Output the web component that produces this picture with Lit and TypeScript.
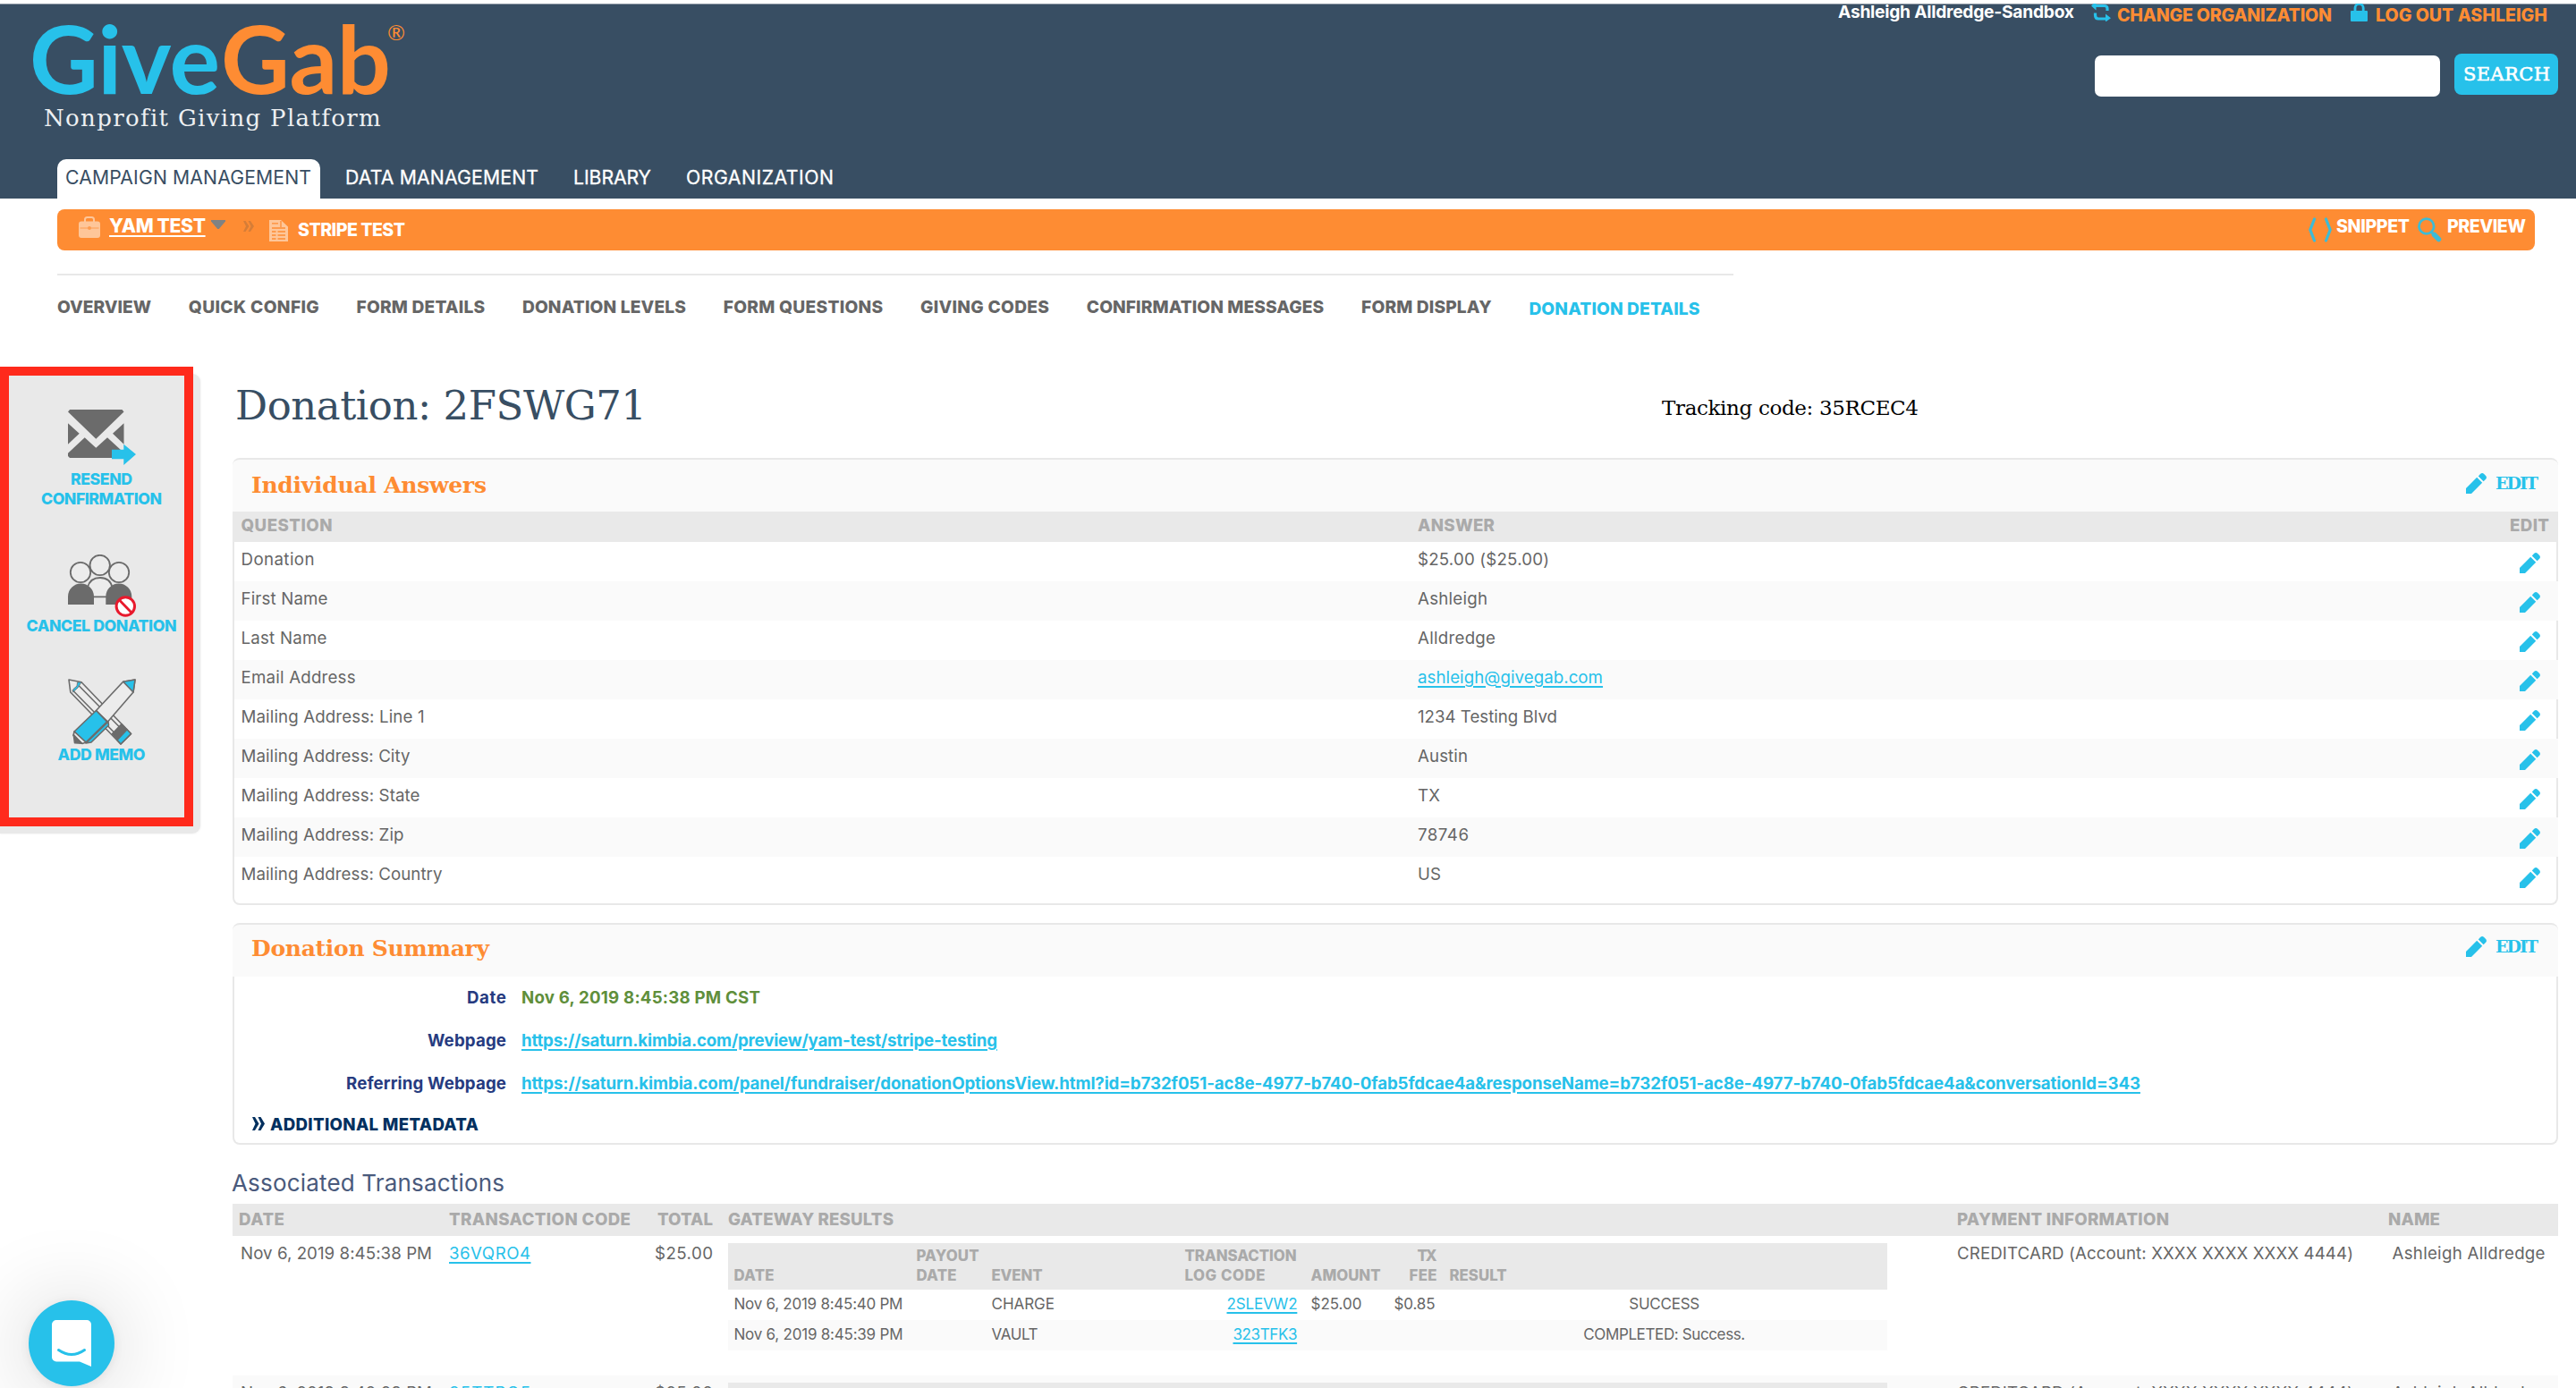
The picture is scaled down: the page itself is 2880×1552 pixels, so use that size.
import { LitElement, html, css } from "lit";
import { customElement, property } from "lit/decorators.js";

/** One line of text whose tracking is tuned so that it spans exactly `w` pixels. */
@customElement("fit-text")
class FitText extends LitElement {
  @property({ type: Number }) w = 0;
  @property() text = "";

  static styles = css`
    :host {
      display: block;
      flex: none;
      white-space: nowrap;
    }
  `;

  updated() {
    const span = this.renderRoot.querySelector("span") as HTMLElement;
    span.style.letterSpacing = "0px";
    const natural = span.getBoundingClientRect().width;
    const gaps = Math.max(1, this.text.length - 1);
    span.style.letterSpacing = `${((this.w - natural) / gaps).toFixed(3)}px`;
    this.style.width = `${this.w}px`;
  }

  render() {
    return html`<span>${this.text}</span>`;
  }
}

const t = (text: string, w: number, cls = "") =>
  html`<fit-text class=${cls} .text=${text} .w=${w}></fit-text>`;

const pencil = html`<svg class="pencil" viewBox="0 0 23 23">
  <path d="M0 23V17L12.2 4.8l6 6L6 23z" />
  <path d="M13.8 3.4 16 1.1a3 3 0 0 1 4.2 0l1.7 1.7a3 3 0 0 1 0 4.2L19.6 9.2z" />
</svg>`;

const answers: [string, number, string, number][] = [
  ["Donation", 82, "$25.00 ($25.00)", 147],
  ["First Name", 97, "Ashleigh", 78],
  ["Last Name", 96, "Alldredge", 87],
  ["Email Address", 128, "ashleigh@givegab.com", 207],
  ["Mailing Address: Line 1", 205, "1234 Testing Blvd", 156],
  ["Mailing Address: City", 189, "Austin", 56],
  ["Mailing Address: State", 200, "TX", 25],
  ["Mailing Address: Zip", 182, "78746", 57],
  ["Mailing Address: Country", 225, "US", 26],
];

const subnav: [string, number][] = [
  ["OVERVIEW", 105],
  ["QUICK CONFIG", 146],
  ["FORM DETAILS", 143.5],
  ["DONATION LEVELS", 183],
  ["FORM QUESTIONS", 178.5],
  ["GIVING CODES", 144],
  ["CONFIRMATION MESSAGES", 265.5],
  ["FORM DISPLAY", 145.5],
];

@customElement("app-root")
class AppRoot extends LitElement {
  static styles = css`
    :host {
      display: block;
      position: relative;
      width: 2880px;
      height: 1552px;
      overflow: hidden;
      background: #fff;
      color: #666;
      font: 18.7px/24px Inter, "Open Sans", "Liberation Sans", sans-serif;
    }
    * {
      box-sizing: border-box;
    }
    svg {
      display: block;
      flex: none;
    }
    .row {
      display: flex;
      align-items: flex-start;
    }
    .slab {
      font-family: "DejaVu Serif", serif;
    }
    .link {
      color: #27c1ea;
      text-decoration: underline;
      text-decoration-thickness: 2px;
      text-underline-offset: 3px;
    }

    /* header */
    .header {
      height: 222px;
      border-top: 4px solid #fff;
      background: #384e63;
      box-shadow: inset 0 1px 0 #8e99a5;
      display: flex;
      flex-direction: column;
      justify-content: space-between;
    }
    .banner {
      display: flex;
      justify-content: space-between;
    }
    .logo {
      padding: 20px 0 0 33px;
    }
    .word {
      font-family: Lato, sans-serif;
      font-size: 106px;
      font-weight: 700;
      line-height: 80px;
    }
    .give {
      color: #27c1ea;
    }
    .gab {
      color: #fe8c33;
      margin-left: 1px;
    }
    .reg {
      color: #fe8c33;
      font-family: Lato, sans-serif;
      font-size: 24px;
      line-height: 24px;
      margin-left: -4px;
    }
    .tagline {
      margin: 13px 0 0 16px;
      font-size: 26px;
      line-height: 30px;
      color: #eef0f2;
    }
    .account {
      height: 56px;
      padding-right: 32px;
      color: #fe8c33;
      font-size: 19.6px;
      font-weight: 800;
    }
    .account fit-text {
      margin-top: 1px;
    }
    .account .who {
      color: #fff;
      margin: -3px 19px 0 0;
      font-size: 19.2px;
      font-weight: 700;
    }
    .account .swap {
      margin-right: 7px;
    }
    .account .lock {
      margin: 0 9px 0 21px;
    }
    .search {
      justify-content: flex-end;
      gap: 16px;
      padding-right: 20px;
    }
    .field {
      width: 386px;
      height: 46px;
      margin-top: 2px;
      border-radius: 7px;
      background: #fff;
    }
    .button {
      width: 116px;
      height: 46px;
      border-radius: 8px;
      background: #27c1ea;
      padding: 11px 0 0 10px;
      color: #fff;
      font-size: 21px;
      -webkit-text-stroke: 0.6px #fff;
    }
    .tabs {
      height: 44px;
      padding-left: 64px;
      gap: 39px;
      color: #fff;
      font-size: 21.2px;
    }
    .tabs > fit-text {
      margin-top: 7.5px;
      -webkit-text-stroke: 0.3px #fff;
    }
    .tab {
      width: 294px;
      height: 44px;
      margin-right: -11px;
      padding: 7.5px 10px 0 9px;
      border-radius: 10px 10px 0 0;
      background: #fff;
      color: #384e63;
    }

    /* breadcrumb */
    .crumbs {
      width: 2770px;
      height: 46px;
      margin: 12px 0 0 64px;
      padding: 0 10px 0 24px;
      border-radius: 8px;
      background: #fe8c33;
      color: #fff;
      font-size: 19.6px;
      font-weight: 800;
    }
    .case {
      margin: 8px 10px 0 0;
    }
    .yam {
      margin-top: 5.5px;
      font-size: 21.2px;
      text-decoration: underline;
      text-decoration-thickness: 2px;
      text-underline-offset: 3px;
    }
    .caret {
      margin: 12px 20px 0 6px;
    }
    .chev {
      margin: 13px 17px 0 0;
    }
    .doc {
      margin: 12px 11px 0 0;
    }
    .stripe {
      margin-top: 11px;
    }
    .snip {
      margin: 9px 5px 0 auto;
    }
    .crumbs .act {
      margin-top: 7px;
    }
    .glass {
      margin: 9px 6px 0 9px;
    }

    .subnav {
      width: 1874px;
      height: 104px;
      margin: 26px 0 0 64px;
      padding-top: 22.5px;
      border-top: 2px solid #e8e8e8;
      gap: 41.8px;
      font-size: 19.2px;
      font-weight: 800;
    }
    .subnav .on {
      color: #27c1ea;
      margin-top: 2px;
    }

    /* side tools */
    .side {
      position: relative;
      flex: none;
      width: 260px;
      padding-top: 8px;
    }
    .tools {
      width: 224px;
      height: 514px;
      padding: 40px 0 0 3px;
      border-radius: 0 9px 9px 0;
      background: #e9e9e9;
      box-shadow: 0 0 3px rgba(0, 0, 0, 0.08);
      display: flex;
      flex-direction: column;
      align-items: center;
      color: #27c1ea;
      font-size: 17.7px;
      font-weight: 800;
      line-height: 22px;
    }
    .frame {
      position: absolute;
      left: 0;
      top: 0;
      width: 216px;
      height: 514px;
      border: 10px solid #ff2a1c;
    }
    .env {
      margin-bottom: 5px;
    }
    .people {
      margin: 51px 0 -1px;
    }
    .pens {
      margin: 48px 0 0;
    }

    /* main column */
    .main {
      width: 2600px;
    }
    .head {
      height: 102px;
      padding: 20px 0 0 3px;
    }
    .title {
      font-size: 45px;
      line-height: 48px;
      color: #384e63;
    }
    .tracking {
      margin: 14px 0 0 1135px;
      font-size: 23px;
      color: #000;
    }
    .phead {
      height: 60px;
      border-top: 2px solid #e8e8e8;
      border-radius: 8px 8px 0 0;
      background: #fafafa;
      padding: 0 22px 0 21px;
    }
    .ptitle {
      margin: 17px auto 0 0;
      color: #fe8c33;
      font-size: 25px;
      font-weight: 700;
    }
    .phead .edit {
      margin-top: 14px;
      color: #27c1ea;
      font-size: 19px;
      font-weight: 700;
    }
    .phead .pencil {
      margin: 15px 10px 0 0;
    }
    .summary .ptitle {
      margin-top: 15px;
    }
    .summary .edit {
      margin-top: 12px;
    }
    .summary .phead .pencil {
      margin-top: 13px;
    }
    .pencil {
      width: 23px;
      height: 23px;
      fill: #27c1ea;
    }
    .cols {
      height: 34px;
      padding: 3.5px 10px 0 9.5px;
      display: grid;
      grid-template-columns: 1315.5px 1fr auto;
      background: #e9e9e9;
      color: #aaa;
      font-weight: 800;
    }
    .pbody {
      border: 2px solid #e8e8e8;
      border-top: 0;
      border-radius: 0 0 8px 8px;
    }
    .answers {
      height: 406px;
    }
    .ans {
      height: 44px;
      margin-right: -2px;
      padding: 8px 20px 0 7.5px;
      display: grid;
      grid-template-columns: 1315.5px 1fr auto;
    }
    .ans:nth-child(even) {
      background: #fafafa;
    }
    .ans .pencil {
      margin-top: 3.5px;
    }
    .ans:nth-child(odd) {
      margin-right: 0;
      padding-right: 18px;
    }
    .summary {
      margin-top: 20px;
    }
    .sbody {
      height: 188px;
      padding-top: 12px;
      font-weight: 700;
    }
    .pair {
      display: grid;
      grid-template-columns: 304px 1fr;
      column-gap: 17px;
      height: 48px;
      color: #263b80;
    }
    .pair > :first-child {
      justify-self: end;
    }
    .pair .green {
      color: #5f8f3b;
    }
    .meta {
      padding-left: 20px;
      margin-top: -2px;
      gap: 6px;
      color: #03305f;
      font-weight: 800;
    }
    .meta svg {
      margin-top: 3px;
    }

    .assoc {
      margin: 28px 0 0 -1px;
      height: 38px;
      line-height: 30px;
      font-size: 26px;
      color: #4a5a7c;
    }
    .tgrid {
      display: grid;
      grid-template-columns: 242px 232px 80px 1374px 482px 190px;
      align-items: start;
    }
    .thead {
      height: 36px;
      padding-top: 5.5px;
      background: #e9e9e9;
      color: #aaa;
      font-weight: 800;
    }
    .trow {
      height: 156px;
      padding-top: 8px;
    }
    .trow.alt {
      background: #fafafa;
    }
    .c1 {
      margin-left: 9px;
    }
    .th1 {
      margin-left: 7px;
    }
    .c3 {
      justify-self: end;
      margin-right: 17px;
    }
    .c6 {
      margin-left: 4.5px;
    }
    .nested {
      width: 1296px;
      font-size: 17px;
      line-height: 22px;
    }
    .ngrid {
      display: grid;
      grid-template-columns: 204px 84px 216px 126px 15px 78px 63px 14px 1fr;
      padding-left: 6.5px;
      align-items: end;
    }
    .nhead {
      height: 52px;
      padding-bottom: 5px;
      background: #e9e9e9;
      color: #aaa;
      font-weight: 800;
      font-size: 16.8px;
    }
    .nrow {
      height: 34px;
      padding-bottom: 7px;
      background: #fff;
    }
    .nrow.alt {
      background: #fafafa;
    }
    .end {
      justify-self: end;
    }
    .fee {
      margin-right: 2px;
    }
    .mid {
      justify-self: center;
      margin-right: 9px;
    }
    .right {
      display: flex;
      flex-direction: column;
      align-items: flex-end;
    }

    .chat {
      position: absolute;
      left: 32px;
      top: 1454px;
      width: 96px;
      height: 96px;
      border-radius: 50%;
      background: #27c1ea;
      box-shadow: 0 2px 12px rgba(0, 0, 0, 0.08), 0 4px 100px rgba(0, 0, 0, 0.2);
    }
  `;

  private panelHead(title: string, w: number) {
    return html`<div class="phead row">
      ${t(title, w, "ptitle slab")} ${pencil} ${t("EDIT", 48, "edit slab")}
    </div>`;
  }

  private transaction(alt: boolean, date: string, code: string) {
    return html`<div class="tgrid trow ${alt ? "alt" : ""}">
      ${t(date, 214, "c1")} ${t(code, 91, "link")} ${t("$25.00", 65, "c3")}
      <div class="nested">
        <div class="ngrid nhead">
          ${t("DATE", 45)}
          <div>${t("PAYOUT", 70)} ${t("DATE", 45)}</div>
          ${t("EVENT", 57)}
          <div>${t("TRANSACTION", 125)} ${t("LOG CODE", 90)}</div>
          <span></span>
          ${t("AMOUNT", 78)}
          <div class="right end">${t("TX", 22)} ${t("FEE", 31)}</div>
          <span></span>
          ${t("RESULT", 64)}
        </div>
        <div class="ngrid nrow">
          ${t("Nov 6, 2019 8:45:40 PM", 189)}
          <span></span>
          ${t("CHARGE", 70.5)} ${t("2SLEVW2", 79, "link end")}
          <span></span>
          ${t("$25.00", 57)} ${t("$0.85", 46, "end fee")}
          <span></span>
          ${t("SUCCESS", 79, "mid")}
        </div>
        <div class="ngrid nrow alt">
          ${t("Nov 6, 2019 8:45:39 PM", 189)}
          <span></span>
          ${t("VAULT", 52)} ${t("323TFK3", 72, "link end")}
          <span></span><span></span><span></span><span></span>
          ${t("COMPLETED: Success.", 181, "mid")}
        </div>
      </div>
      ${t("CREDITCARD (Account: XXXX XXXX XXXX 4444)", 443)}
      ${t("Ashleigh Alldredge", 171, "c6")}
    </div>`;
  }

  render() {
    return html`
      <div class="header">
        <div class="banner">
          <div class="logo">
            <div class="row">
              ${t("Give", 213, "word give")} ${t("Gab", 190, "word gab")}
              <span class="reg">®</span>
            </div>
            ${t("Nonprofit Giving Platform", 376, "tagline slab")}
          </div>
          <div>
            <div class="row account">
              ${t("Ashleigh Alldredge-Sandbox", 264, "who")}
              <svg class="swap" width="22" height="20" viewBox="0 0 22 20" fill="none" stroke="#27c1ea" stroke-width="3.2">
                <path d="M18 8V5.500Q18 2.500 14.500 2.500H4" />
                <path d="M4.500 10.500V13Q4.500 17 8 17H18" />
                <path d="M5.500-2.500v10L0 2.500zM16 11.500v9l6-4.200z" fill="#27c1ea" stroke="none" />
              </svg>
              ${t("CHANGE ORGANIZATION", 240)}
              <svg class="lock" width="19" height="20" viewBox="0 0 19 20">
                <path d="M5 9V5a4.600 4.600 0 0 1 9.200 0v4" fill="none" stroke="#27c1ea" stroke-width="2.8" />
                <rect y="8" width="19" height="12" rx="1" fill="#27c1ea" />
              </svg>
              ${t("LOG OUT ASHLEIGH", 192)}
            </div>
            <div class="row search">
              <div class="field"></div>
              <div class="button">${t("SEARCH", 97, "slab")}</div>
            </div>
          </div>
        </div>
        <div class="row tabs">
          <div class="tab">${t("CAMPAIGN MANAGEMENT", 275)}</div>
          ${t("DATA MANAGEMENT", 216)} ${t("LIBRARY", 87)} ${t("ORGANIZATION", 165)}
        </div>
      </div>

      <div class="row crumbs">
        <svg class="case" width="24" height="24" viewBox="0 0 24 24">
          <path d="M7 6V3.500Q7 1 9.500 1h5Q17 1 17 3.500V6" fill="none" stroke="#fec699" stroke-width="2" />
          <rect y="5.500" width="24" height="18.500" rx="3" fill="#fec699" />
          <path d="M1.500 13h21" stroke="#fe9c50" />
          <circle cx="12" cy="13" r="2" fill="#fe9c50" />
        </svg>
        ${t("YAM TEST", 108, "yam")}
        <svg class="caret" width="16" height="10" viewBox="0 0 16 10">
          <path d="M0 0h16v1.500L8.800 10H7.200L0 1.500z" fill="#7f8283" />
        </svg>
        <svg class="chev" width="12" height="12" viewBox="0 0 12 12" fill="#d67d37">
          <path d="M0 0h2.500l4 6-4 6H0l3-6zM5.500 0H8l4 6-4 6H5.500l3-6z" />
        </svg>
        <svg class="doc" width="21" height="24" viewBox="0 0 21 24">
          <path d="M0 0h13l8 7.500V24H0z" fill="#fec699" />
          <g stroke="#fe8c33" stroke-width="1.3" fill="none">
            <path d="M3 3.800h7M3 9h15M3 13h4.500M9.500 13H18M3 17h4.500M9.500 17H18M3 21h4.500M9.500 21H18M13 1v7" />
          </g>
        </svg>
        ${t("STRIPE TEST", 120, "stripe")}
        <svg class="snip" width="26" height="28" viewBox="0 0 26 28" fill="none" stroke="#3dbbd6" stroke-width="3.2" stroke-linecap="round" stroke-linejoin="round">
          <path d="M6.500 2 1.800 14l4.700 12M19.500 2l4.700 12-4.700 12" />
        </svg>
        ${t("SNIPPET", 82, "act")}
        <svg class="glass" width="27" height="28" viewBox="0 0 27 28" fill="none" stroke="#3dbbd6">
          <circle cx="9.800" cy="10" r="8.300" stroke-width="2.8" />
          <path d="m15.500 16.500 3 3" stroke-width="3" />
          <path d="m18.500 19.500 5 5" stroke-width="5.5" stroke-linecap="round" />
        </svg>
        ${t("PREVIEW", 88, "act")}
      </div>

      <div class="row subnav">
        ${subnav.map(([s, w]) => t(s, w))} ${t("DONATION DETAILS", 191, "on")}
      </div>

      <div class="row">
        <div class="side">
          <div class="tools">
            <svg class="env" width="76" height="62" viewBox="0 0 76 62" fill="#6b6b6b">
              <path d="M2 0h58.500l2 2.500L31.300 32.700 0 2.500zM0 15.300l12.700 11.400L0 38.700zM62.500 15.300v23.400L50 26.700zM0 48.700l18.700-17.400 12.600 11.400L44 31.300l18.500 17V54H2L0 52z" />
              <path d="M49 44.700h13.300v-6L76 50 62.300 62v-6.700H49z" fill="#27c1ea" />
            </svg>
            ${t("RESEND", 69)} ${t("CONFIRMATION", 135)}
            <svg class="people" width="76" height="70" viewBox="0 0 76 70">
              <g fill="#ececec" stroke="#6b6b6b" stroke-width="1.8">
                <path d="M22 36.500C24 29 29 26 36 26s12 4 13.500 11v10.300H24z" />
                <circle cx="14" cy="20" r="11.200" />
                <circle cx="57" cy="20" r="11.200" />
                <circle cx="35.700" cy="12" r="11.200" />
              </g>
              <path d="M0 56V47a14.500 14.500 0 0 1 29 0v9zM42.300 56V47a14.500 14.500 0 0 1 29 0v9z" fill="#6b6b6b" />
              <circle cx="64.300" cy="58" r="10.200" fill="#fff" stroke="#e8192c" stroke-width="3" />
              <path d="m57 50.500 14.500 15" stroke="#e8192c" stroke-width="2.8" />
            </svg>
            ${t("CANCEL DONATION", 168)}
            <svg class="pens" width="76" height="74" viewBox="0 0 76 74" stroke="#6b6b6b" stroke-width="1.6" stroke-linejoin="round">
              <path d="M1 1 15 3.700 70.500 61.500 59 73 2.800 15z" fill="#ececec" />
              <path d="m11 6.500 56 57M5 12.500l55 56" fill="none" />
              <path d="m15 3.700-4 6.300-5.500 5 .5-3.500 4-3.500.5-4z" fill="#27c1ea" stroke-width=".8" />
              <path d="m60 50.500 6 6.200L55.500 68l-6-6.500z" fill="#6b6b6b" />
              <path d="m66 56.700 4.500 4.800L59 73l-4-4.500z" fill="#27c1ea" />
              <path d="M75 1 61.700 3.200 31.500 35.500l13 12.500L73 15z" fill="#ececec" />
              <path d="M75 1 61.700 3.200 73 15z" fill="#27c1ea" />
              <path d="m45 48 .5 4L26 71l-6 1z" fill="#27c1ea" />
              <path d="M31.500 35.500 43.500 48 20 71 7 59z" fill="#27c1ea" />
              <path d="M7 59 20 71l-4 1.500-10-9z" fill="#ececec" />
              <path d="m6.300 62.500 9.200 9.700-8-.5z" fill="#6b6b6b" />
            </svg>
            ${t("ADD MEMO", 98)}
          </div>
          <div class="frame"></div>
        </div>

        <div class="main">
          <div class="row head">
            ${t("Donation: 2FSWG71", 460, "title slab")}
            ${t("Tracking code: 35RCEC4", 287, "tracking slab")}
          </div>

          ${this.panelHead("Individual Answers", 263)}
          <div class="cols">${t("QUESTION", 102)} ${t("ANSWER", 86)} ${t("EDIT", 44)}</div>
          <div class="pbody answers">
            ${answers.map(
              ([q, qw, a, aw]) =>
                html`<div class="ans">${t(q, qw)} ${t(a, aw, a.includes("@") ? "link" : "")} ${pencil}</div>`
            )}
          </div>

          <div class="summary">
            ${this.panelHead("Donation Summary", 266)}
            <div class="pbody sbody">
              <div class="pair">${t("Date", 44)} ${t("Nov 6, 2019 8:45:38 PM CST", 267, "green")}</div>
              <div class="pair">
                ${t("Webpage", 88)}
                ${t("https://saturn.kimbia.com/preview/yam-test/stripe-testing", 532, "link")}
              </div>
              <div class="pair">
                ${t("Referring Webpage", 179)}
                ${t("https://saturn.kimbia.com/panel/fundraiser/donationOptionsView.html?id=b732f051-ac8e-4977-b740-0fab5fdcae4a&responseName=b732f051-ac8e-4977-b740-0fab5fdcae4a&conversationId=343", 1810, "link")}
              </div>
              <div class="row meta">
                <svg width="14" height="15" viewBox="0 0 14 15" fill="#03305f">
                  <path d="M0 0h3l4.500 7.500L3 15H0l3.500-7.500zM6.500 0h3L14 7.500 9.500 15h-3L10 7.500z" />
                </svg>
                ${t("ADDITIONAL METADATA", 233)}
              </div>
            </div>
          </div>

          ${t("Associated Transactions", 305, "assoc")}
          <div class="tgrid thead">
            ${t("DATE", 51, "th1")} ${t("TRANSACTION CODE", 203)} ${t("TOTAL", 62, "c3")}
            ${t("GATEWAY RESULTS", 185)} ${t("PAYMENT INFORMATION", 237)} ${t("NAME", 58)}
          </div>
          ${this.transaction(false, "Nov 6, 2019 8:45:38 PM", "36VQRO4")}
          ${this.transaction(true, "Nov 6, 2019 8:40:28 PM", "35TTPG5")}
        </div>
      </div>

      <div class="chat">
        <svg width="96" height="96" viewBox="0 0 96 96">
          <path d="M31 22h34a5 5 0 0 1 5 5v47l-13-5.500H31a5 5 0 0 1-5-5V27a5 5 0 0 1 5-5z" fill="#fff" />
          <path d="M33.500 55.500q14.500 10 29 0" fill="none" stroke="#27c1ea" stroke-width="3" stroke-linecap="round" />
        </svg>
      </div>
    `;
  }
}
